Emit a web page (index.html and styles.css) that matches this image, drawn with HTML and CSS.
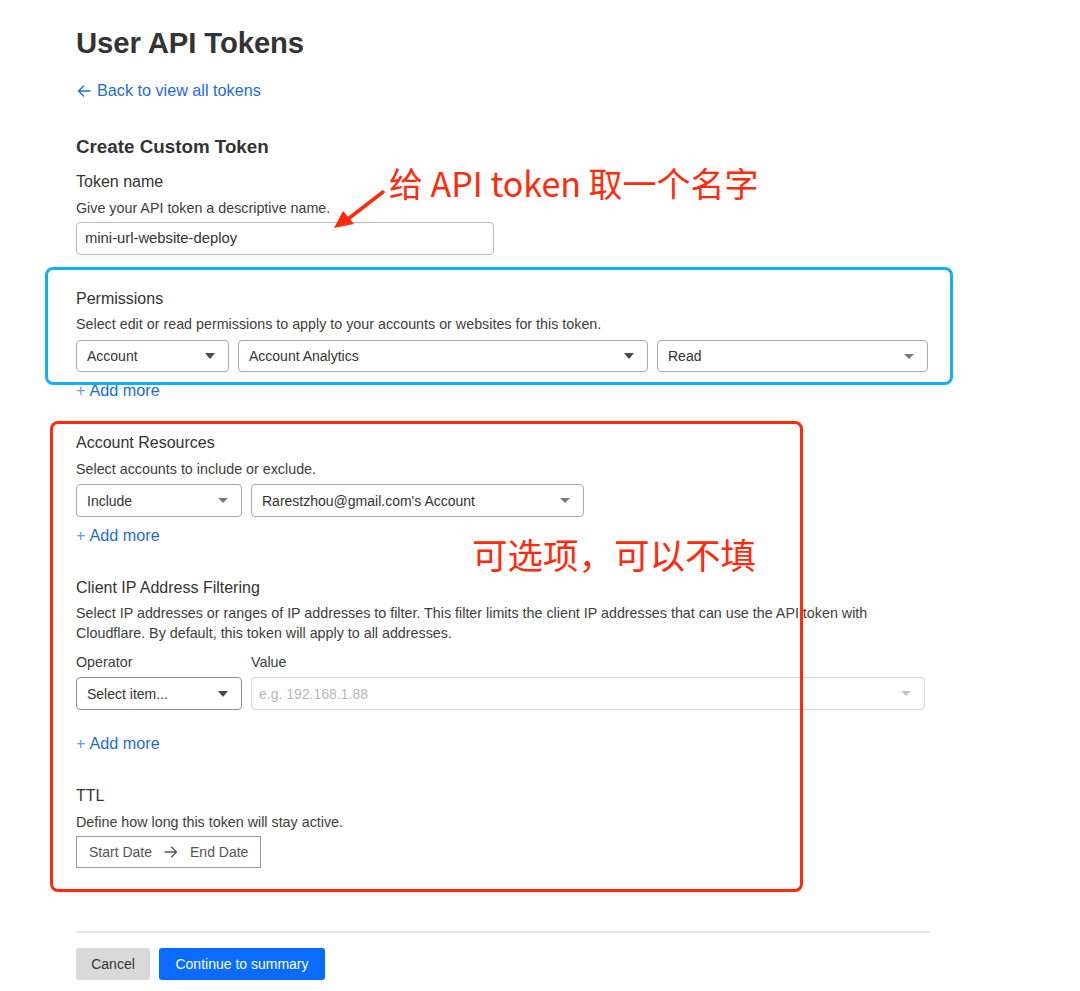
FILE: index.html
```html
<!DOCTYPE html>
<html lang="en">
<head>
<meta charset="utf-8">
<title>User API Tokens</title>
<link rel="stylesheet" href="styles.css">
</head>
<body>
<main class="page">
  <h1 class="title">User API Tokens</h1>
  <a class="link back" href="#"><svg class="icon-left" width="14" height="12" viewBox="0 0 14 12" xmlns="http://www.w3.org/2000/svg"><path d="M13 6H1.5M6.5 1L1.5 6l5 5" stroke="#1f6bd6" stroke-width="1.3" fill="none" stroke-linecap="round" stroke-linejoin="round"/></svg>Back to view all tokens</a>

  <h2 class="subtitle">Create Custom Token</h2>

  <div class="label mt13">Token name</div>
  <div class="desc mt6">Give your API token a descriptive name.</div>
  <div class="input mt4">mini-url-website-deploy</div>

  <div class="label mt34">Permissions</div>
  <div class="desc mt5">Select edit or read permissions to apply to your accounts or websites for this token.</div>
  <div class="row mt6">
    <div class="select w153"><span>Account</span><i class="caret"></i></div>
    <div class="select w410"><span>Account Analytics</span><i class="caret"></i></div>
    <div class="select w271"><span>Read</span><i class="caret light"></i></div>
  </div>
  <a class="link add mt8" href="#"><span class="plus">+</span> Add more</a>

  <div class="label mt33">Account Resources</div>
  <div class="desc mt6">Select accounts to include or exclude.</div>
  <div class="row mt5">
    <div class="select w166 h33"><span>Include</span><i class="caret light"></i></div>
    <div class="select w333 h33"><span>Rarestzhou@gmail.com's Account</span><i class="caret light"></i></div>
  </div>
  <a class="link add mt8" href="#"><span class="plus">+</span> Add more</a>

  <div class="label mt33">Client IP Address Filtering</div>
  <div class="desc wrap mt5">Select IP addresses or ranges of IP addresses to filter. This filter limits the client IP addresses that can use the API token with Cloudflare. By default, this token will apply to all addresses.</div>
  <div class="row mt9">
    <div class="desc w166">Operator</div>
    <div class="desc">Value</div>
  </div>
  <div class="row mt5">
    <div class="select w166 h33 dark"><span>Select item...</span><i class="caret"></i></div>
    <div class="select w674 h33 faint"><span class="placeholder">e.g. 192.168.1.88</span><i class="caret faint-caret"></i></div>
  </div>
  <a class="link add mt23" href="#"><span class="plus">+</span> Add more</a>

  <div class="label mt33">TTL</div>
  <div class="desc mt6">Define how long this token will stay active.</div>
  <div class="daterange mt4">
    <span>Start Date</span>
    <svg class="date-arrow" width="14" height="12" viewBox="0 0 14 12" xmlns="http://www.w3.org/2000/svg"><path d="M1 6h11.5M7.5 1l5 5-5 5" stroke="#555" stroke-width="1.3" fill="none" stroke-linecap="round" stroke-linejoin="round"/></svg>
    <span>End Date</span>
  </div>

  <hr class="divider">

  <div class="actions">
    <button class="btn btn-cancel" type="button">Cancel</button>
    <button class="btn btn-primary" type="button">Continue to summary</button>
  </div>
</main>

<div class="note-box blue-box"></div>
<div class="note-box red-box"></div>
<div class="note note-name">给 API token 取一个名字</div>
<div class="note note-optional">可选项，可以不填</div>
<svg class="note-arrow" width="70" height="50" viewBox="0 0 70 50" xmlns="http://www.w3.org/2000/svg">
  <path d="M53 4 L18 31" stroke="#ff2a0b" stroke-width="3.5" stroke-linecap="round" fill="none"/>
  <path d="M4 40 L13 23 L24 36 Z" fill="#ff2a0b"/>
</svg>
</body>
</html>
```

FILE: styles.css
```css
* { box-sizing: border-box; }

html, body {
  margin: 0;
  padding: 0;
  background: #ffffff;
}

body {
  font-family: "Liberation Sans", Arial, "Noto Sans CJK SC", sans-serif;
  color: #333333;
  width: 1080px;
  height: 991px;
  position: relative;
  overflow: hidden;
}

.page {
  padding: 26px 0 0 76px;
  width: 930px;
}

.title {
  margin: 0;
  font-size: 29.3px;
  line-height: 34px;
  font-weight: 700;
  color: #333333;
  letter-spacing: -0.1px;
}

.link {
  display: flex;
  align-items: center;
  color: #1f6bd6;
  text-decoration: none;
  font-size: 16.2px;
  line-height: 20px;
  width: max-content;
}

.back { margin-top: 20px; }
.icon-left { margin: 1px 6px 0 1px; }
.plus { color: #6b9be0; font-weight: 300; margin-right: 4px; }

.subtitle {
  margin: 35px 0 0;
  font-size: 18.8px;
  line-height: 24px;
  font-weight: 700;
  color: #333333;
}

.label {
  font-size: 16px;
  line-height: 20px;
  color: #333333;
}

.desc {
  font-size: 14.3px;
  line-height: 20px;
  color: #3d3d3d;
}

.desc.wrap { width: 820px; }

.mt4 { margin-top: 4px; }
.mt5 { margin-top: 5px; }
.mt6 { margin-top: 6px; }
.mt8 { margin-top: 8px; }
.mt9 { margin-top: 9px; }
.mt13 { margin-top: 13px; }
.mt23 { margin-top: 23px; }
.mt33 { margin-top: 33px; }
.mt34 { margin-top: 34px; }

.input {
  width: 418px;
  height: 33px;
  border: 1px solid #b9b9b9;
  border-radius: 4px;
  padding: 0 8px;
  font-size: 14.8px;
  line-height: 31px;
  color: #333333;
}

.row {
  display: flex;
  gap: 9px;
}

.select {
  height: 32px;
  border: 1px solid #a9a9a9;
  border-radius: 4px;
  padding: 0 13px 0 10px;
  display: flex;
  align-items: center;
  justify-content: space-between;
  font-size: 14px;
  color: #333333;
}

.select.h33 { height: 33px; }
.select.dark { border-color: #8f8f8f; }
.select.faint { border-color: #d6d6d6; padding-left: 7px; }

.placeholder { color: #b8b8b8; }

.w153 { width: 153px; }
.w166 { width: 166px; }
.w271 { width: 271px; }
.w333 { width: 333px; }
.w410 { width: 410px; }
.w674 { width: 674px; }

.caret {
  display: block;
  width: 0;
  height: 0;
  border-left: 5px solid transparent;
  border-right: 5px solid transparent;
  border-top: 6px solid #4a4a4a;
}

.caret.light { border-top-color: #7a7a7a; border-top-width: 5px; }
.caret.faint-caret { border-top-color: #c4c4c4; border-top-width: 5px; }

.daterange {
  width: 185px;
  height: 32px;
  border: 1px solid #9a9a9a;
  display: flex;
  align-items: center;
  padding-left: 12px;
  gap: 10px;
  font-size: 14px;
  color: #555555;
}

.date-arrow { display: block; margin: 0 2px; }

.divider {
  margin: 63px 0 0;
  width: 854px;
  height: 2px;
  border: 0;
  background: #e8e8e8;
}

.actions {
  margin-top: 15px;
  display: flex;
  gap: 9px;
}

.btn {
  height: 32px;
  border: 0;
  border-radius: 3px;
  font-family: inherit;
  font-size: 14px;
  padding: 0;
}

.btn-cancel {
  width: 74px;
  background: #d9d9d9;
  color: #333333;
}

.btn-primary {
  width: 166px;
  background: #0a6cff;
  color: #ffffff;
}

/* annotation overlays */
.note-box {
  position: absolute;
  border-style: solid;
  border-width: 3px;
  border-radius: 8px;
  pointer-events: none;
}

.blue-box {
  left: 45px;
  top: 267px;
  width: 908px;
  height: 118px;
  border-color: #14aef5;
}

.red-box {
  left: 50px;
  top: 421px;
  width: 753px;
  height: 471px;
  border-color: #ff2a0b;
}

.note {
  position: absolute;
  color: #ff2a0b;
  font-family: "Noto Sans CJK SC", "Liberation Sans", sans-serif;
  font-weight: 400;
  white-space: nowrap;
}

.note-name {
  left: 389px;
  top: 160px;
  font-size: 34px;
  line-height: 46px;
}

.note-optional {
  left: 472px;
  top: 530px;
  font-size: 35.5px;
  line-height: 48px;
}

.note-arrow {
  position: absolute;
  left: 330px;
  top: 188px;
}
```
